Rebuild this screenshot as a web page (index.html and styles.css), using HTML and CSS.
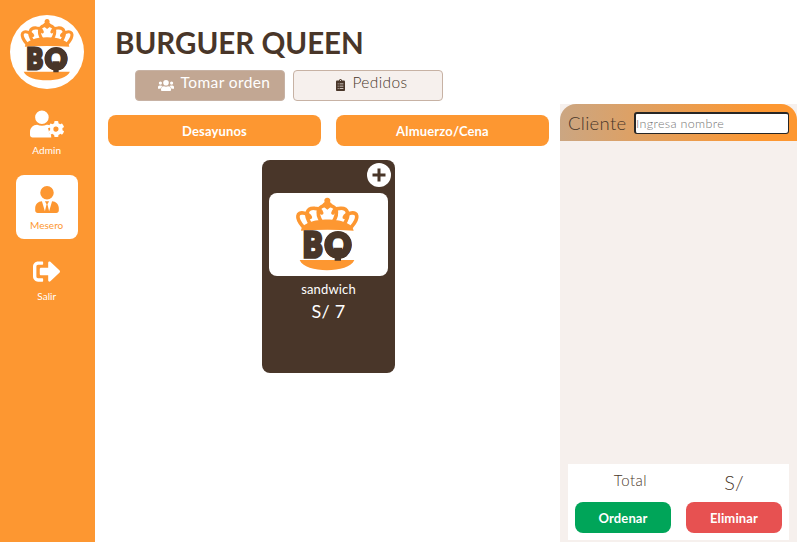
FILE: index.html
```html
<!DOCTYPE html>
<html lang="es">
<head>
<meta charset="utf-8">
<title>Burguer Queen</title>
<link rel="stylesheet" href="styles.css">
</head>
<body>
<svg width="0" height="0" class="defs">
  <clipPath id="q-round"><circle cx="147" cy="156" r="42"/></clipPath>
  <symbol id="logo" viewBox="0 0 240 252">
    <g fill="none" stroke="#fd9731" stroke-width="11" stroke-linecap="round">
      <path d="M42 101C18 73 25 57 43 60C55 62 62 67 64 73"/>
      <path d="M66 95C44 65 54 43 78 46C90 47 96 53 98 60"/>
      <path d="M98 88C79 58 87 38 115 36C143 38 151 58 132 88"/>
      <path d="M164 95C186 65 176 43 152 46C140 47 134 53 132 60"/>
      <path d="M188 101C212 73 205 57 187 60C175 62 168 67 166 73"/>
    </g>
    <path fill="#fd9731" d="M36 113C40 68 190 68 194 113Q115 107 36 113ZM32 201H196C180 242 48 242 32 201ZM100 34Q105 28 107 27A9 9 0 1 1 123 27Q125 30 130 34L124 43L115 50L106 43Z"/>
    <text class="logo-letters" x="42" y="193" textLength="58" lengthAdjust="spacingAndGlyphs">B</text>
    <text class="logo-letters" clip-path="url(#q-round)" x="107" y="192" textLength="80" lengthAdjust="spacingAndGlyphs">Q</text>
    <path fill="#493629" d="M134 164H159V176H156V203H137V176H134Z"/>
  </symbol>
</svg>
<div class="app">
  <nav class="sidebar">
    <div class="brand"><svg><use href="#logo"/></svg></div>
    <a class="nav-item admin">
      <svg width="35" height="28" viewBox="0 0 640 512" fill="currentColor"><path d="M224 256A128 128 0 1 0 224 0a128 128 0 0 0 0 256zM395 454a87 87 0 0 1-45-84l-12-28 28-22c5-12 9-18 17-29-22-14-38-19-69-19-56 22-124 22-180 0C60 272 0 332 0 407v57c0 26 22 48 48 48h352z"/><path fill-rule="evenodd" d="m636 388-26-15c3-14 3-29 0-43l26-15c3-2 4-5 3-8-7-22-18-41-33-58-2-2-6-3-9-1l-26 15c-11-9-23-16-37-21v-30c0-3-2-6-6-7-22-5-45-5-66 0-4 1-6 4-6 7v30c-14 5-26 12-37 21l-26-15c-3-2-7-1-9 1-15 17-26 36-33 58-1 3 0 6 3 8l26 15c-3 14-3 29 0 43l-26 15c-3 2-4 5-3 8 7 22 18 41 33 58 2 2 6 3 9 1l26-15c11 9 23 16 37 21v30c0 3 2 6 6 7 22 5 45 5 66 0 4-1 6-4 6-7v-30c14-5 26-12 37-21l26 15c3 2 7 1 9-1 15-17 26-36 33-58 1-3 0-6-3-8zm-140 12a49 49 0 1 1 0-97 49 49 0 0 1 0 97z"/></svg>
      <span>Admin</span>
    </a>
    <a class="nav-item active">
      <svg width="24" height="27" viewBox="0 0 448 512" fill="currentColor"><path d="M224 256A128 128 0 1 0 224 0a128 128 0 0 0 0 256zm96 31-56 193-32-136 32-56h-80l32 56-32 136-56-193C57 290 0 343 0 417v47c0 26 22 48 48 48h352c26 0 48-22 48-48v-47c0-74-57-127-128-130z"/></svg>
      <span>Mesero</span>
    </a>
    <a class="nav-item exit">
      <svg width="27" height="27" viewBox="0 0 512 512" fill="currentColor"><path d="M505 273 329 441c-15 15-41 5-41-17v-96H152c-13 0-24-11-24-24v-96c0-13 11-24 24-24h136V88c0-21 26-32 41-17l176 168c9 9 9 24 0 34zM192 436v-40c0-7-5-12-12-12H96c-18 0-32-14-32-32V160c0-18 14-32 32-32h84c7 0 12-5 12-12V76c0-7-5-12-12-12H96c-53 0-96 43-96 96v192c0 53 43 96 96 96h84c7 0 12-5 12-12z"/></svg>
      <span>Salir</span>
    </a>
  </nav>
  <main class="content">
    <h1>BURGUER QUEEN</h1>
    <div class="tabs">
      <button class="tab selected">
        <svg width="16" height="13" viewBox="0 0 640 512" fill="currentColor"><circle cx="96" cy="160" r="64"/><circle cx="544" cy="160" r="64"/><circle cx="320" cy="144" r="112"/><path d="M64 256c-40 0-64 30-64 65v65h100c10-48 34-82 73-101-20-23-40-29-109-29zM576 256c40 0 64 30 64 65v65H540c-10-48-34-82-73-101 20-23 40-29 109-29zM235 288c-62 0-115 48-115 115v29c0 27 21 48 48 48h304c27 0 48-21 48-48v-29c0-67-53-115-115-115-58 22-112 22-170 0z"/></svg>
        <span>Tomar orden</span>
      </button>
      <button class="tab orders">
        <svg width="9" height="12" viewBox="0 0 384 512" fill="currentColor"><path fill-rule="evenodd" d="M336 64h-80a64 64 0 0 0-128 0H48c-26 0-48 22-48 48v352c0 26 22 48 48 48h288c26 0 48-22 48-48V112c0-26-22-48-48-48zM192 40a24 24 0 1 1 0 48 24 24 0 0 1 0-48zM72 195h40v30H72zM155 195h160v30H155zM72 291h40v30H72zM155 291h160v30H155zM72 387h40v30H72zM155 387h160v30H155z"/></svg>
        <span>Pedidos</span>
      </button>
    </div>
    <div class="workspace">
      <section class="menu">
        <div class="categories"><button class="desayunos">Desayunos</button><button class="almuerzo">Almuerzo/Cena</button></div>
        <article class="product">
          <button class="add"><svg width="24" height="24" viewBox="0 0 24 24"><circle cx="12" cy="12" r="12" fill="#fff"/><path d="M12 5.5v13M5.5 12h13" stroke="#493629" stroke-width="3"/></svg></button>
          <div class="photo"><svg><use href="#logo"/></svg></div>
          <div class="name">sandwich</div>
          <div class="price">S/ 7</div>
        </article>
      </section>
      <aside class="order">
        <header><label for="client">Cliente</label><input id="client" placeholder="Ingresa nombre"></header>
        <div class="summary">
          <span class="total">Total</span><span class="amount">S/</span>
          <button class="send">Ordenar</button><button class="remove">Eliminar</button>
        </div>
      </aside>
    </div>
  </main>
</div>
</body>
</html>
```
FILE: styles.css
```css
* { box-sizing: border-box; }
body { margin: 0; background: #fff; color: #493629; font-family: Lato, "Open Sans", sans-serif; overflow: hidden; }
button, input { font: inherit; border: 0; padding: 0; }
svg { display: block; flex: none; }
.defs { position: absolute; }
.app { display: flex; width: 811px; height: 542px; }

.sidebar { width: 95.4px; background: #fd9731; color: #fff; display: flex; flex-direction: column; align-items: center; padding: 15px 2px 0 0; }
.brand { width: 74px; height: 74px; border-radius: 50%; background: #fff; display: flex; justify-content: center; }
.brand svg { width: 69px; height: 71px; margin: 0 0 0 3px; }
.logo-letters { font-family: Lato, sans-serif; font-weight: 900; font-size: 102px; fill: #493629; stroke: #493629; stroke-width: 11px; }
.nav-item { display: flex; flex-direction: column; align-items: center; width: 62px; font-size: 10px; line-height: 12px; }
.nav-item svg { margin-bottom: 6px; }
.admin { margin-top: 21px; height: 65px; }
.admin svg { width: 34px; }
.admin span { letter-spacing: 0.1px; }
.active { height: 64px; padding-top: 11px; border-radius: 8px; background: #fff; color: #fd9731; }
.exit { margin-top: 19px; }
.exit svg { margin-bottom: 5px; }

.content { flex: 1; }
h1 { margin: 26px 0 0 19.6px; height: 44px; font-size: 29.5px; line-height: 34px; font-weight: 700; letter-spacing: 0; }
.tabs { display: flex; gap: 8px; margin-left: 39.6px; }
.tab { width: 150px; height: 31px; border: 1px solid #c7b2a4; border-radius: 4px; background: #f6f0ed; color: #493629; display: flex; justify-content: center; gap: 7px; font-size: 15.5px; line-height: 23px; letter-spacing: 0.4px; }
.tab svg { margin-top: 8px; }
.selected { background: #c2a793; color: #fff; padding-left: 8px; }
.orders { padding-left: 8px; font-weight: 300; }
.workspace { display: flex; justify-content: space-between; height: 438px; margin: 3px 14px 0 12.6px; }
.menu { width: 441px; padding-top: 11px; }
.categories { display: flex; gap: 15px; }
.categories button { flex: 1; height: 31px; border-radius: 8px; background: #fd9731; color: #fff; font-size: 13px; font-weight: 700; padding-top: 1px; letter-spacing: 0.15px; }
.product { width: 133.5px; height: 212.5px; margin: 14px auto 0; border-radius: 8px; background: #493629; color: #fff; padding: 4px 7px; text-align: center; }
.add { display: block; margin: -1px -3px 6px auto; background: none; }
.photo { height: 83px; border-radius: 8px; background: #fff; display: flex; justify-content: center; }
.photo svg { width: 80px; height: 84px; margin: 0 0 0 2px; }
.name { margin-top: 4px; font-size: 13px; line-height: 18px; letter-spacing: 0.15px; }
.price { font-size: 18px; line-height: 26px; letter-spacing: 0.2px; }

.order { width: 237px; background: #f6f0ed; display: flex; flex-direction: column; justify-content: space-between; }
.order header { height: 37.4px; border-radius: 16px 16px 0 0; background: linear-gradient(90deg, #cba682, #fd9731 85%); display: flex; align-items: center; padding: 0 8px; }
.order label { width: 66px; font-size: 18.5px; font-weight: 300; letter-spacing: 0.3px; }
.order input { width: 155px; height: 22px; border: 1px solid #262626; border-top-width: 2px; border-left-width: 2px; border-radius: 3px; background: #fff; font-size: 12.5px; font-weight: 300; letter-spacing: 0.35px; }
.order input::placeholder { color: #757575; opacity: 1; }
.summary { margin: 0 8px 2px; height: 76px; padding: 0 7px; background: #fff; display: grid; grid-template: 38px 31px / 1fr 1fr; column-gap: 15px; text-align: center; font-weight: 300; }
.total { font-size: 15px; line-height: 33px; padding-left: 15px; letter-spacing: 0.5px; }
.amount { font-size: 20px; line-height: 37px; }
.summary button { border-radius: 8px; color: #fff; font-size: 13px; font-weight: 700; letter-spacing: 0.15px; }
.send { background: #00a559; }
.remove { background: #e75151; }
```
